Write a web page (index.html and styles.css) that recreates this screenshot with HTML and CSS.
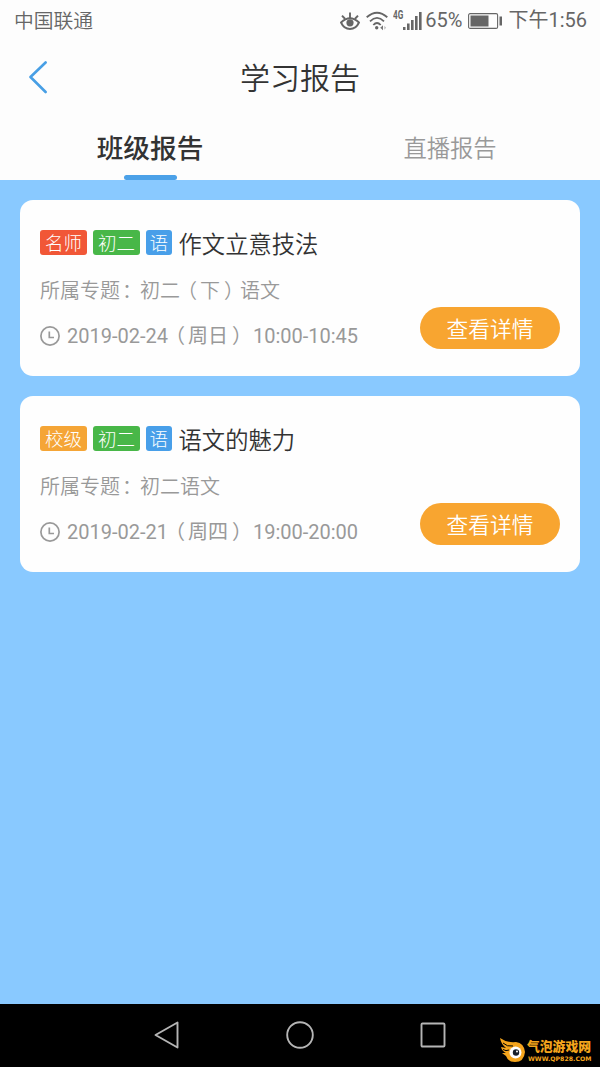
FILE: index.html
```html
<!DOCTYPE html>
<html lang="zh-CN">
<head>
    <meta charset="UTF-8">
    <meta name="viewport" content="width=device-width, initial-scale=1.0">
    <title>学习报告</title>
    <link rel="stylesheet" href="styles.css">
</head>
<body>
    <div class="status-bar">
        <span class="carrier">中国联通</span>
        <div class="status-icons">
            <svg class="icon-eye" width="20" height="20" viewBox="0 0 20 20" fill="none" stroke="#666" stroke-width="1.9">
                <path d="M1 11.5Q10 3 19 11.5Q16 18 10 18Q4 18 1 11.5Z"/>
                <circle cx="10" cy="11.8" r="3.6" fill="#666" stroke="none"/>
                <path d="M10 1.5V7M2 4.6L5.2 8M18 4.6L14.8 8"/>
            </svg>
            <svg class="icon-wifi" width="22" height="20" viewBox="0 0 22 20" fill="none" stroke="#666" stroke-width="1.8">
                <path d="M.7 6.3Q11-2.7 21.3 6.3M4 10.3Q11 3.5 18 10.3M7.3 14Q11 10 14.7 14"/>
                <circle cx="10.7" cy="16.8" r="1.7" fill="#666" stroke="none"/>
                <path d="M17 14.3v5l-2.8-2.5z" fill="#777" stroke="none"/>
                <path d="M18.3 14.8l1.8 2-1.8 2z" fill="#bbb" stroke="none"/>
            </svg>
            <span class="network">4G</span>
            <svg class="icon-signal" width="19" height="19" viewBox="0 0 19 19" fill="#666">
                <path d="M0 16h2.5v3H0zM4 12.5h2.6V19H4zM8 9h2.6v10H8zM12 5h2.6v14h-2.6zM16 1h2.6v18h-2.6z"/>
            </svg>
            <span class="percent">65%</span>
            <svg class="icon-battery" width="34" height="16" viewBox="0 0 34 16">
                <rect x=".6" y=".6" width="29" height="14.8" rx="1.5" fill="none" stroke="#666" stroke-width="1.1"/>
                <path d="M2.5 2.5h18v11h-18zM31.5 3.5H34v9h-2.5z" fill="#666"/>
            </svg>
            <span class="time">下午1:56</span>
        </div>
    </div>

    <header class="nav">
        <svg class="back" width="20" height="34" viewBox="0 0 20 34" fill="none" stroke="#489fe5" stroke-width="2.6" stroke-linecap="round" stroke-linejoin="round">
            <path d="M17.6 1.5L2.5 16L17.6 31"/>
        </svg>
        <h1>学习报告</h1>
    </header>

    <div class="tabs">
        <div class="tab active">班级报告</div>
        <div class="tab">直播报告</div>
    </div>

    <main class="list">
        <div class="card">
            <div class="card-title">
                <span class="tag red">名师</span>
                <span class="tag green">初二</span>
                <span class="tag blue">语</span>
                <h2>作文立意技法</h2>
            </div>
            <div class="card-body">
                <div class="card-info">
                    <p>所属专题<span class="colon">：</span>初二<span class="open">（</span>下<span class="close">）</span>语文</p>
                    <p class="date">
                        <svg class="clock" width="20" height="20" viewBox="0 0 20 20" fill="none" stroke="#999" stroke-width="1.7">
                            <circle cx="10" cy="10" r="9.1"/>
                            <path d="M9.3 5.5V11.5H14"/>
                        </svg>
                        <span>2019-02-24<span class="open">（</span>周日<span class="close">）</span> 10:00-10:45</span>
                    </p>
                </div>
                <button class="detail">查看详情</button>
            </div>
        </div>

        <div class="card">
            <div class="card-title">
                <span class="tag orange">校级</span>
                <span class="tag green">初二</span>
                <span class="tag blue">语</span>
                <h2>语文的魅力</h2>
            </div>
            <div class="card-body">
                <div class="card-info">
                    <p>所属专题<span class="colon">：</span>初二语文</p>
                    <p class="date">
                        <svg class="clock" width="20" height="20" viewBox="0 0 20 20" fill="none" stroke="#999" stroke-width="1.7">
                            <circle cx="10" cy="10" r="9.1"/>
                            <path d="M9.3 5.5V11.5H14"/>
                        </svg>
                        <span>2019-02-21<span class="open">（</span>周四<span class="close">）</span> 19:00-20:00</span>
                    </p>
                </div>
                <button class="detail">查看详情</button>
            </div>
        </div>
    </main>

    <footer class="system-nav">
        <svg width="26" height="30" viewBox="0 0 26 30" fill="none" stroke="#b5b5b5" stroke-width="1.9" stroke-linejoin="round">
            <path d="M23.5 2.5V27.5L1.5 15Z"/>
        </svg>
        <svg width="30" height="30" viewBox="0 0 30 30" fill="none" stroke="#b5b5b5" stroke-width="1.9">
            <circle cx="15" cy="15" r="12.8"/>
        </svg>
        <svg width="26" height="30" viewBox="0 0 26 30" fill="none" stroke="#b5b5b5" stroke-width="1.9">
            <rect x="1.5" y="3.5" width="23" height="23" rx="1"/>
        </svg>
        <div class="watermark">
            <svg width="26" height="25" viewBox="0 0 26 25">
                <path d="M0 0Q7 5 16 4Q24 5 25 14Q24 24 15 24Q8 24 6 18L2 15L6 15Q2 13 1 9L6 10Q1 6 0 0Z" fill="#f5a51c"/>
                <path d="M3 5Q7 9 13 8M3 11.5Q6 13.5 9 12" fill="none" stroke="#000" stroke-width="1"/>
                <circle cx="15.5" cy="14.5" r="6" fill="#fff"/>
                <circle cx="16" cy="14.5" r="3.2" fill="#17202b"/>
                <circle cx="17" cy="13.5" r="1" fill="#fff"/>
            </svg>
            <div class="watermark-text">
                <span class="site-name">气泡游戏网</span>
                <span class="site-url">WWW.QP828.COM</span>
            </div>
        </div>
    </footer>
</body>
</html>
```
FILE: styles.css
```css
* {
    box-sizing: border-box;
}

body {
    display: flex;
    flex-direction: column;
    height: 1067px;
    margin: 0;
    background-color: #89c9ff;
    color: #333;
    font-family: Roboto, "Noto Sans CJK SC", sans-serif;
}

h1, h2, p {
    margin: 0;
    font-weight: 350;
}

svg {
    display: block;
    flex-shrink: 0;
}

.status-bar {
    display: flex;
    justify-content: space-between;
    height: 42px;
    padding: 0 13px 0 14px;
    background-color: #fdfdfd;
    color: #666;
    font-size: 20px;
    line-height: 41px;
    white-space: nowrap;
}

.carrier {
    font-size: 19.8px;
    font-weight: 350;
    line-height: 44px;
}

.status-icons {
    display: flex;
    align-items: center;
    height: 41px;
}

.icon-wifi {
    margin-left: 6px;
}

.network {
    align-self: flex-start;
    width: 10px;
    margin: 9px 0 0 5px;
    font-size: 12px;
    font-weight: bold;
    line-height: 13px;
    transform: scaleX(.68);
    transform-origin: left;
}

.percent {
    margin-left: 3px;
    line-height: 43px;
}

.time {
    line-height: 43px;
}

.icon-battery {
    margin: 0 6px;
}

.nav {
    display: grid;
    grid-template-columns: 60px 1fr 60px;
    align-items: center;
    height: 72px;
    background-color: #fdfdfd;
}

.back {
    margin-left: 28px;
}

.nav h1 {
    padding-top: 2px;
    font-size: 30px;
    line-height: 44px;
    text-align: center;
}

.tabs {
    display: flex;
    height: 66px;
    background-color: #fdfdfd;
}

.tab {
    display: flex;
    flex: 1;
    flex-direction: column;
    align-items: center;
    color: #999;
    font-size: 23.3px;
    font-weight: 350;
    line-height: 70px;
}

.active {
    color: #333;
    font-size: 26.7px;
    font-weight: 500;
}

.active::after {
    content: "";
    width: 53px;
    height: 5px;
    margin-top: -9px;
    border-radius: 3px;
    background-color: #4ba1e8;
}

.list {
    display: flex;
    flex: 1;
    flex-direction: column;
    gap: 20px;
    padding: 20px;
}

.card {
    height: 176px;
    padding: 30px 20px 0;
    border-radius: 13px;
    background-color: #fefefe;
}

.card-title {
    display: flex;
    gap: 6px;
    height: 26px;
}

.card-title h2 {
    margin-left: 1px;
    font-size: 23.3px;
    line-height: 30px;
}

.tag {
    height: 25px;
    padding: 0 5px;
    border-radius: 3px;
    color: #fff;
    font-size: 18.5px;
    font-weight: 300;
    line-height: 28px;
}

.red {
    background-color: #f15737;
}

.green {
    background-color: #48b748;
}

.blue {
    padding: 0 3.5px;
    background-color: #489fe9;
}

.orange {
    background-color: #f5a536;
}

.card-body {
    display: flex;
    justify-content: space-between;
    padding-top: 20px;
}

.card-info {
    display: flex;
    flex-direction: column;
    gap: 15px;
    color: #999;
    font-size: 20px;
    line-height: 30px;
    white-space: nowrap;
}

/* half-width punctuation, spaced back out to a 20px cell */
.open,
.close,
.colon {
    font-feature-settings: "halt";
}

.open {
    margin: 0 3px 0 7px;
}

.close {
    margin: 0 6px 0 4px;
}

.colon {
    margin: 0 8px 0 2px;
}

.date {
    display: flex;
    align-items: center;
    gap: 7px;
    font-weight: 400;
}

.detail {
    width: 140px;
    height: 42px;
    margin-top: 31px;
    padding: 2px 0 0;
    border: none;
    border-radius: 21px;
    background-color: #f8a530;
    color: #fff;
    font-family: inherit;
    font-size: 21.7px;
    font-weight: 350;
    line-height: 42px;
}

.system-nav {
    position: relative;
    display: flex;
    justify-content: space-between;
    height: 63px;
    padding: 16px 154px 0;
    background-color: #000;
}

.watermark {
    position: absolute;
    right: 7px;
    bottom: 4px;
    display: flex;
    gap: 1px;
    width: 93px;
    color: #f5a51c;
    white-space: nowrap;
}

.watermark-text {
    display: flex;
    flex-direction: column;
}

.site-name {
    font-size: 12.8px;
    font-weight: 900;
    line-height: 17px;
}

.site-url {
    padding-left: 1px;
    font-family: "DejaVu Sans", sans-serif;
    font-size: 6.2px;
    font-weight: bold;
    line-height: 7px;
}
```
